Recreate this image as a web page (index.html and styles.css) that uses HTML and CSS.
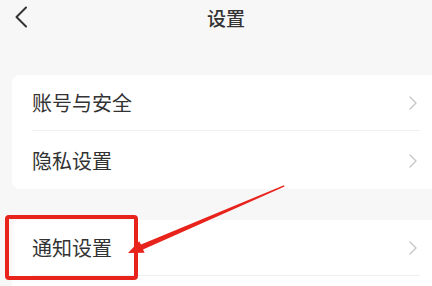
FILE: index.html
```html
<!DOCTYPE html>
<html lang="zh-CN">
<head>
<meta charset="utf-8">
<title>设置</title>
<link rel="stylesheet" href="styles.css">
</head>
<body>
<div class="page">
  <header class="topbar">
    <span class="back">
      <svg width="14" height="22" viewBox="0 0 14 22"><path d="M12 1.5 L2.5 11 L12 20.5" fill="none" stroke="#333" stroke-width="2" stroke-linecap="round" stroke-linejoin="round"/></svg>
    </span>
    <h1 class="title">设置</h1>
  </header>

  <section class="card first">
    <div class="row"><span class="label">账号与安全</span><span class="chev"><svg width="10" height="16" viewBox="0 0 10 16"><path d="M2 2 L8 8 L2 14" fill="none" stroke="#c6c6c6" stroke-width="1.4" stroke-linecap="round" stroke-linejoin="round"/></svg></span></div>
    <div class="row"><span class="label">隐私设置</span><span class="chev"><svg width="10" height="16" viewBox="0 0 10 16"><path d="M2 2 L8 8 L2 14" fill="none" stroke="#c6c6c6" stroke-width="1.4" stroke-linecap="round" stroke-linejoin="round"/></svg></span></div>
  </section>

  <section class="card second">
    <div class="row"><span class="label">通知设置</span><span class="chev"><svg width="10" height="16" viewBox="0 0 10 16"><path d="M2 2 L8 8 L2 14" fill="none" stroke="#c6c6c6" stroke-width="1.4" stroke-linecap="round" stroke-linejoin="round"/></svg></span></div>
    <div class="row"><span class="label"></span></div>
  </section>

  <div class="highlight"></div>
  <svg class="arrow" width="432" height="286" viewBox="0 0 432 286">
    <polygon points="284,185.3 141,244.6 139.2,241.2 128,253 144.6,252.8 143,249.4 284.6,186.6" fill="#e8231c"/>
  </svg>
</div>
</body>
</html>
```

FILE: styles.css
```css
html, body {
  margin: 0;
  padding: 0;
  background: #f7f7f7;
}
body {
  font-family: "Noto Sans CJK SC", "Noto Sans", sans-serif;
  color: #333;
}
.page {
  position: relative;
  width: 432px;
  height: 286px;
  overflow: hidden;
}
.topbar {
  height: 36px;
  display: flex;
  align-items: center;
  justify-content: center;
  position: relative;
  padding-left: 20px;
}
.back {
  position: absolute;
  left: 14px;
  top: 6px;
  display: flex;
}
.title {
  margin: 0;
  font-size: 19px;
  font-weight: 500;
  line-height: 36px;
  color: #333;
}
.card {
  background: #fff;
  margin-left: 12px;
  border-radius: 8px 0 0 8px;
}
.card.first {
  margin-top: 39px;
}
.card.second {
  margin-top: 31px;
}
.row {
  height: 55px;
  margin-left: 20px;
  margin-right: 12px;
  display: flex;
  align-items: center;
  justify-content: space-between;
  border-bottom: 1px solid #efefef;
}
.first .row:nth-child(2) {
  height: 56px;
  border-bottom: none;
  padding-top: 2px;
}
.label {
  font-size: 20px;
  line-height: 24px;
  color: #333;
}
.chev {
  display: flex;
  margin-right: 2px;
}
.highlight {
  position: absolute;
  left: 5px;
  top: 215px;
  width: 125px;
  height: 57px;
  border: 4px solid #e8231c;
  border-radius: 4px;
}
.arrow {
  position: absolute;
  left: 0;
  top: 0;
}
```
